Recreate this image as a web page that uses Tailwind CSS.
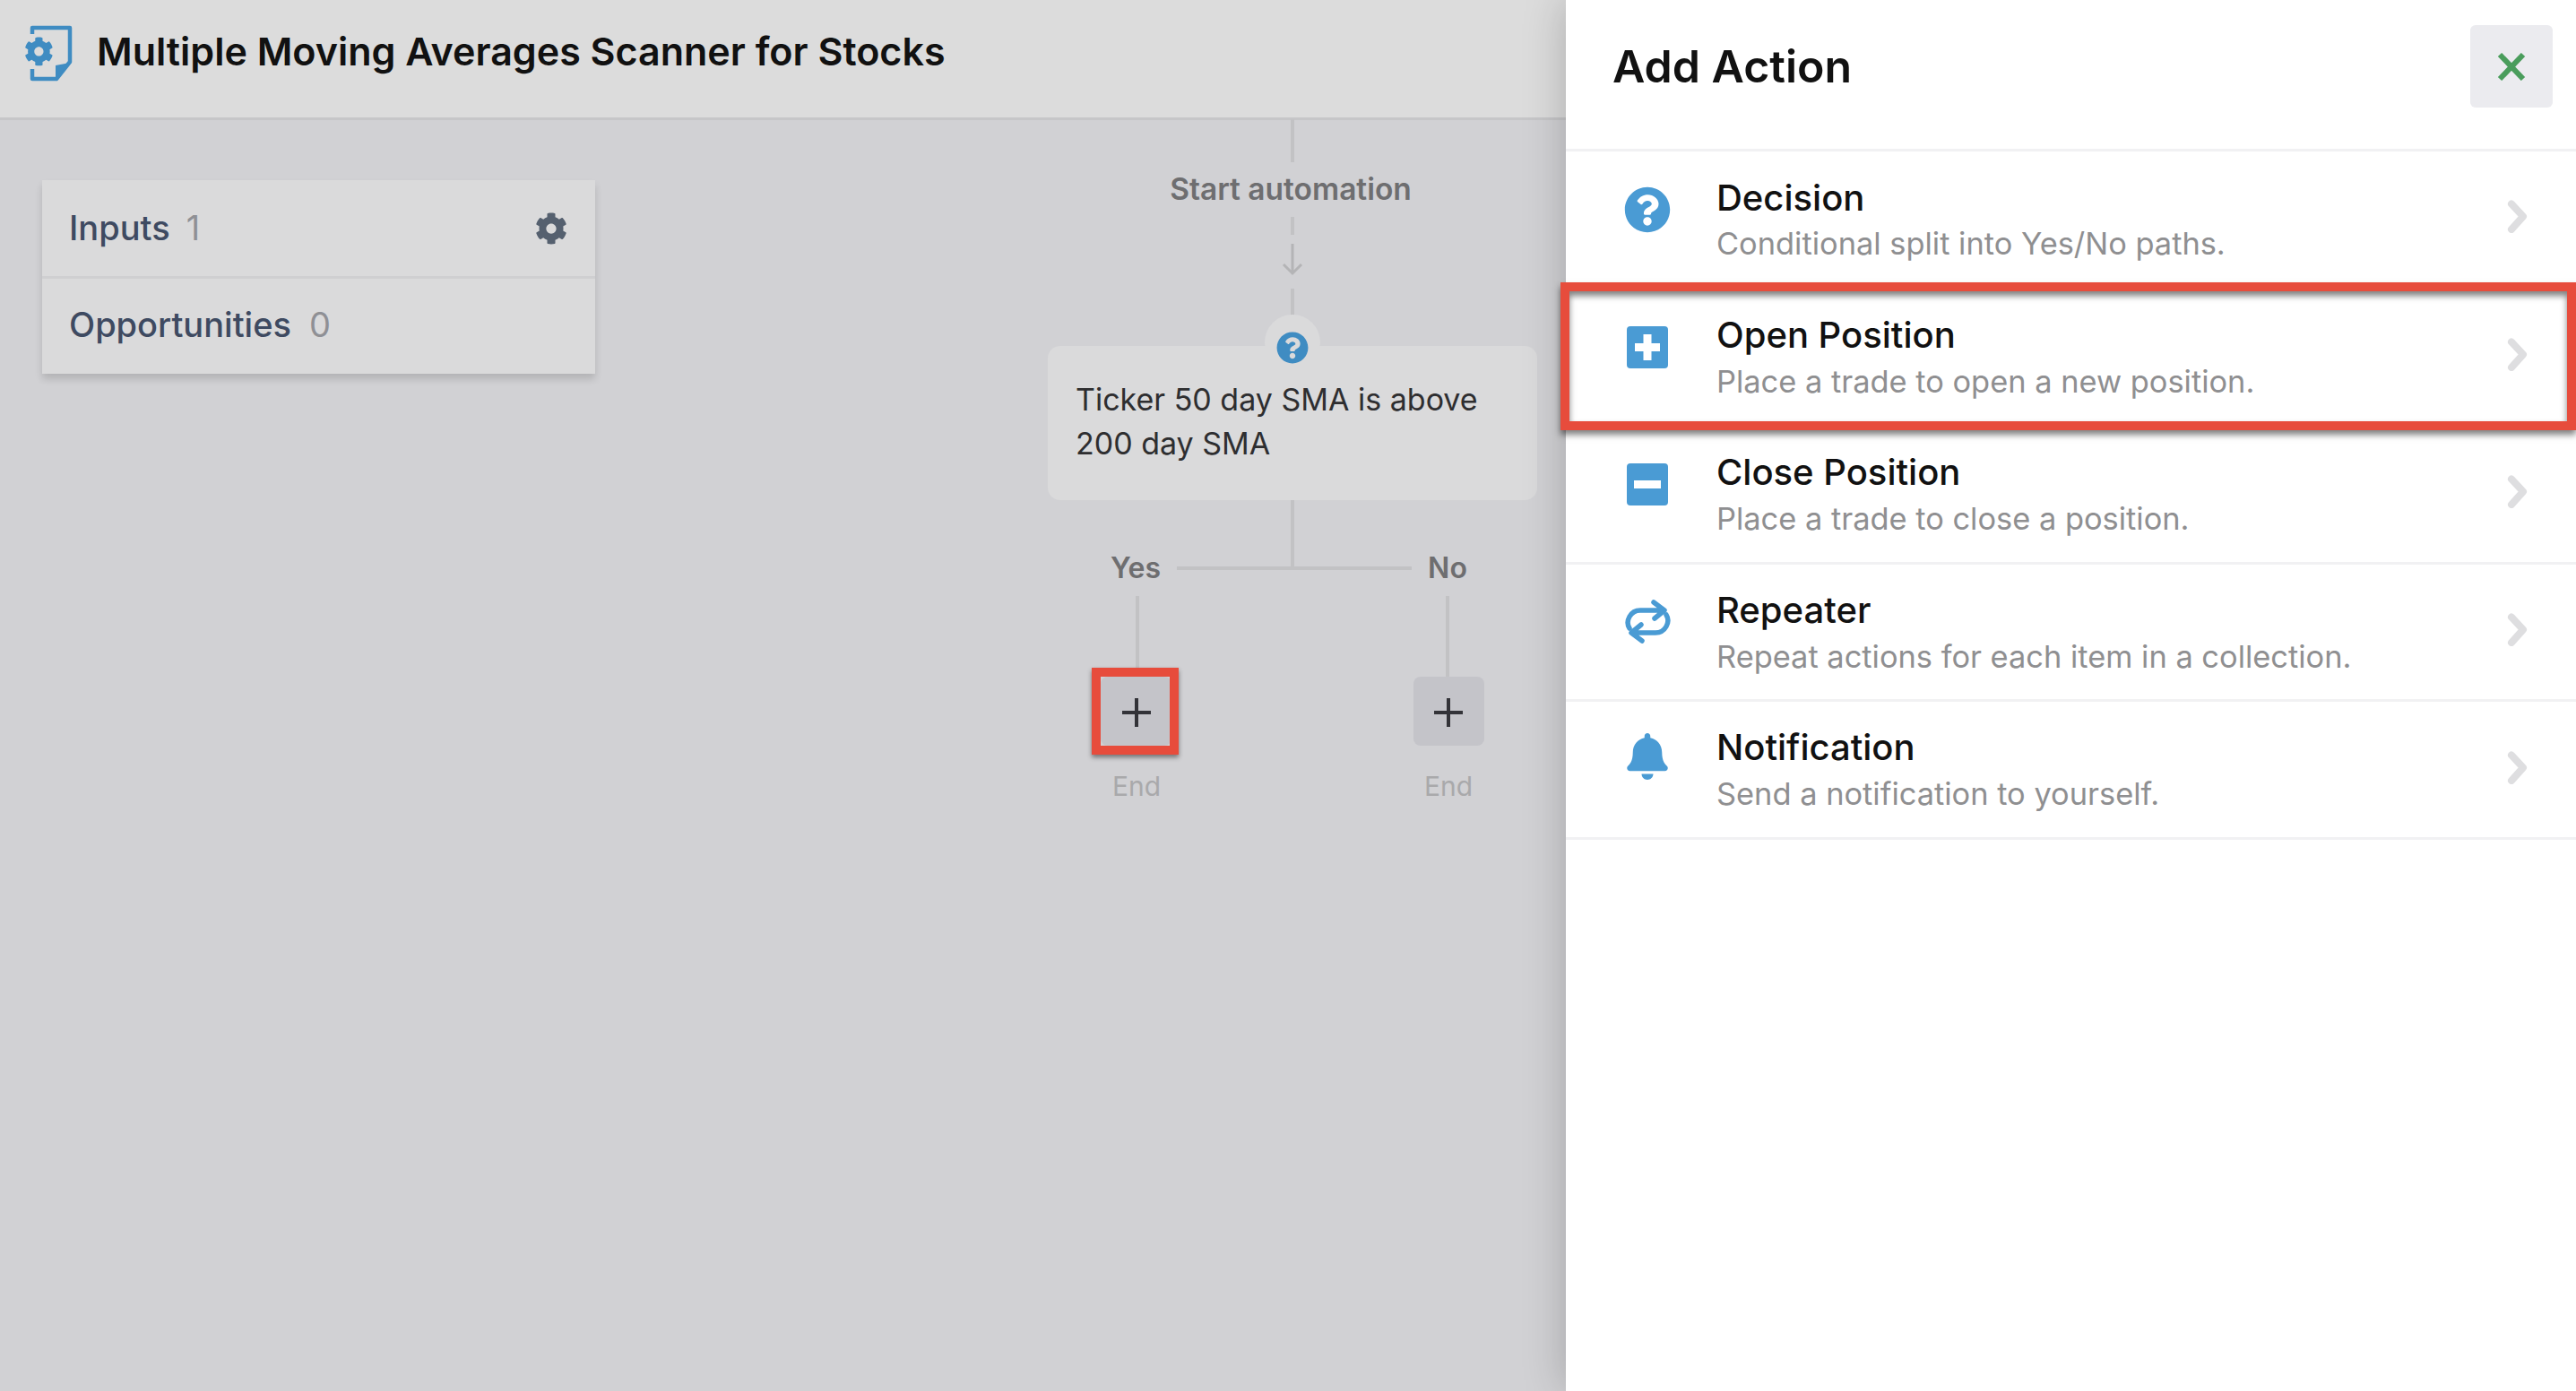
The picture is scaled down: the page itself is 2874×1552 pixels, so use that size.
<!DOCTYPE html>
<html lang="en">
<head>
    <meta charset="UTF-8">
    <title>Multiple Moving Averages Scanner for Stocks</title>
    <script src="https://cdn.jsdelivr.net/npm/@tailwindcss/browser@4"></script>
</head>
<body class="bg-[#d1d1d4] font-['Inter',sans-serif] overflow-hidden">
    <div class="flex w-[2874px] h-[1552px]">
        <!-- Dimmed automation editor -->
        <div class="w-[1747px] flex flex-col">
            <header class="h-[134px] bg-[#dcdcdc] border-b-[3px] border-[#c6c6c8] flex items-start">
                <svg class="ml-[27px] mt-[28px] w-[54px] h-[64px]" viewBox="0 0 54 64" fill="none">
                    <path d="M9 10V3H51V41L36 60H9V49" stroke="#3f8cc2" stroke-width="4.5" stroke-linejoin="round"/>
                    <path d="M35 60V45L51 42Z" fill="#3f8cc2"/>
                    <g transform="translate(0 13) scale(0.064)"><path fill="#3f8cc2" d="M487.4 315.7l-42.6-24.6c4.3-23.2 4.3-47 0-70.2l42.6-24.6c4.9-2.8 7.1-8.6 5.5-14-11.1-35.6-30-67.8-54.7-94.6-3.8-4.1-10-5.1-14.8-2.3L380.8 110c-17.9-15.4-38.5-27.3-60.8-35.1V25.8c0-5.6-3.9-10.5-9.4-11.7-36.7-8.2-74.3-7.8-109.2 0-5.5 1.2-9.4 6.1-9.4 11.7V75c-22.2 7.9-42.8 19.8-60.8 35.1L88.7 85.5c-4.9-2.8-11-1.9-14.8 2.3-24.7 26.7-43.6 58.9-54.7 94.6-1.7 5.4.6 11.2 5.5 14L67.3 221c-4.3 23.2-4.3 47 0 70.2l-42.6 24.6c-4.9 2.8-7.1 8.6-5.5 14 11.1 35.6 30 67.8 54.7 94.6 3.8 4.1 10 5.1 14.8 2.3l42.6-24.6c17.9 15.4 38.5 27.3 60.8 35.1v49.2c0 5.6 3.9 10.5 9.4 11.7 36.7 8.2 74.3 7.8 109.2 0 5.5-1.2 9.4-6.1 9.4-11.7v-49.2c22.2-7.9 42.8-19.8 60.8-35.1l42.6 24.6c4.9 2.8 11 1.9 14.8-2.3 24.7-26.7 43.6-58.9 54.7-94.6 1.5-5.5-.7-11.3-5.6-14.1zM256 336c-44.1 0-80-35.9-80-80s35.9-80 80-80 80 35.9 80 80-35.9 80-80 80z"/></g>
                </svg>
                <h1 class="ml-[27px] mt-[32px] text-[43px] leading-[50px] font-semibold text-[#111]">Multiple Moving Averages Scanner for Stocks</h1>
            </header>

            <main class="relative flex-1 -mt-px">
                <!-- Inputs / Opportunities card -->
                <div class="absolute left-[47px] top-[68px] w-[617px] bg-[#dadadb] shadow-[0_6px_8px_rgba(0,0,0,0.14)]">
                    <div class="h-[110px] border-b-[3px] border-[#cfcfd1] flex items-center pl-[30px] pr-[31px] text-[38px] font-medium text-[#3e4a61]">
                        <span>Inputs</span>
                        <span class="ml-[18px] font-normal text-[#8f9095]">1</span>
                        <svg class="ml-auto w-[36px] h-[36px]" viewBox="0 0 512 512"><path fill="#55606f" d="M487.4 315.7l-42.6-24.6c4.3-23.2 4.3-47 0-70.2l42.6-24.6c4.9-2.8 7.1-8.6 5.5-14-11.1-35.6-30-67.8-54.7-94.6-3.8-4.1-10-5.1-14.8-2.3L380.8 110c-17.9-15.4-38.5-27.3-60.8-35.1V25.8c0-5.6-3.9-10.5-9.4-11.7-36.7-8.2-74.3-7.8-109.2 0-5.5 1.2-9.4 6.1-9.4 11.7V75c-22.2 7.9-42.8 19.8-60.8 35.1L88.7 85.5c-4.9-2.8-11-1.9-14.8 2.3-24.7 26.7-43.6 58.9-54.7 94.6-1.7 5.4.6 11.2 5.5 14L67.3 221c-4.3 23.2-4.3 47 0 70.2l-42.6 24.6c-4.9 2.8-7.1 8.6-5.5 14 11.1 35.6 30 67.8 54.7 94.6 3.8 4.1 10 5.1 14.8 2.3l42.6-24.6c17.9 15.4 38.5 27.3 60.8 35.1v49.2c0 5.6 3.9 10.5 9.4 11.7 36.7 8.2 74.3 7.8 109.2 0 5.5-1.2 9.4-6.1 9.4-11.7v-49.2c22.2-7.9 42.8-19.8 60.8-35.1l42.6 24.6c4.9 2.8 11 1.9 14.8-2.3 24.7-26.7 43.6-58.9 54.7-94.6 1.5-5.5-.7-11.3-5.6-14.1zM256 336c-44.1 0-80-35.9-80-80s35.9-80 80-80 80 35.9 80 80-35.9 80-80 80z"/></svg>
                    </div>
                    <div class="h-[106px] pb-[3px] flex items-center pl-[30px] text-[38px] font-medium text-[#3e4a61]">
                        <span>Opportunities</span>
                        <span class="ml-[20px] font-normal text-[#8f9095]">0</span>
                    </div>
                </div>

                <!-- Flow diagram -->
                <div class="absolute left-[1440px] top-0 w-[4px] h-[48px] bg-[#c2c2c4]"></div>
                <div class="absolute left-[1240px] top-[56px] w-[400px] text-center text-[33.5px] leading-[44px] font-semibold text-[#6e6e70]">Start automation</div>
                <div class="absolute left-[1440px] top-[109px] w-[4px] h-[20px] bg-[#c2c2c4]"></div>
                <svg class="absolute left-[1430px] top-[139px] w-[24px] h-[36px]" viewBox="0 0 24 36" fill="none" stroke="#b4b4b6" stroke-width="3"><path d="M12 0V33M2 23L12 33L22 23"/></svg>
                <div class="absolute left-[1440px] top-[189px] w-[4px] h-[32px] bg-[#c2c2c4]"></div>

                <div class="absolute left-[1411px] top-[218px] w-[62px] h-[62px] rounded-full bg-[#dadadb]"></div>
                <div class="absolute left-[1169px] top-[253px] w-[546px] h-[172px] rounded-[14px] bg-[#dadadb] pl-[31px] pt-[35px] text-[34px] leading-[49px] text-[#2e2e30]">Ticker 50 day SMA is above<br>200 day SMA</div>
                <svg class="absolute left-[1424px] top-[237px] w-[36px] h-[36px]" viewBox="0 0 512 512"><path fill="#3f8cc2" d="M504 256c0 136.997-111.043 248-248 248S8 392.997 8 256C8 119.083 119.043 8 256 8s248 111.083 248 248zM262.655 90c-54.497 0-89.255 22.957-116.549 63.758-3.536 5.286-2.353 12.415 2.715 16.258l34.699 26.31c5.205 3.947 12.621 3.008 16.665-2.122 17.864-22.658 30.113-35.797 57.303-35.797 20.429 0 45.698 13.148 45.698 32.958 0 14.976-12.363 22.667-32.534 33.976C247.128 238.528 216 254.941 216 296v4c0 6.627 5.373 12 12 12h56c6.627 0 12-5.373 12-12v-1.333c0-28.462 83.186-29.647 83.186-106.667 0-58.002-60.165-102-116.531-102zM256 338c-25.365 0-46 20.635-46 46 0 25.364 20.635 46 46 46s46-20.636 46-46c0-25.365-20.635-46-46-46z"/></svg>

                <div class="absolute left-[1440px] top-[425px] w-[4px] h-[76px] bg-[#c2c2c4]"></div>
                <div class="absolute left-[1313px] top-[499px] w-[262px] h-[4px] bg-[#c2c2c4]"></div>
                <div class="absolute left-[1217px] top-[479px] w-[100px] text-center text-[32px] leading-[44px] font-semibold text-[#6e6e70]">Yes</div>
                <div class="absolute left-[1565px] top-[479px] w-[100px] text-center text-[32px] leading-[44px] font-semibold text-[#6e6e70]">No</div>
                <div class="absolute left-[1267px] top-[532px] w-[4px] h-[80px] bg-[#c2c2c4]"></div>
                <div class="absolute left-[1613px] top-[532px] w-[4px] h-[90px] bg-[#c2c2c4]"></div>

                <!-- Add buttons -->
                <div class="absolute left-[1228px] top-[622px] w-[79px] h-[77px] rounded-[8px] bg-[#c4c4c9] flex items-center justify-center">
                    <svg class="w-[32px] h-[32px] mt-[2px]" viewBox="0 0 32 32" fill="none" stroke="#333338" stroke-width="4"><path d="M16 0V32M0 16H32"/></svg>
                </div>
                <div class="absolute left-[1577px] top-[622px] w-[79px] h-[77px] rounded-[8px] bg-[#c4c4c9] flex items-center justify-center">
                    <svg class="w-[32px] h-[32px] mt-[2px] -ml-[1px]" viewBox="0 0 32 32" fill="none" stroke="#333338" stroke-width="4"><path d="M16 0V32M0 16H32"/></svg>
                </div>
                <div class="absolute left-[1218px] top-[721px] w-[100px] text-center text-[30px] leading-[46px] text-[#a9a9ab]">End</div>
                <div class="absolute left-[1566px] top-[721px] w-[100px] text-center text-[30px] leading-[46px] text-[#a9a9ab]">End</div>

                <!-- Red highlight on the Yes button -->
                <div class="absolute left-[1218px] top-[612px] w-[97px] h-[97px] border-[10px] border-[#e74c3c] shadow-[0_3px_5px_rgba(0,0,0,0.45)]"></div>
            </main>
        </div>

        <!-- Add Action panel -->
        <aside class="relative w-[1127px] bg-white shadow-[0_0_45px_rgba(0,0,0,0.22)]">
            <div class="h-[169px] border-b-[3px] border-[#f1f1f3] flex items-start pl-[52px] pr-[26px]">
                <h2 class="mt-[44px] text-[50px] leading-[60px] font-semibold text-[#111]">Add Action</h2>
                <button class="ml-auto mt-[28px] w-[92px] h-[92px] rounded-[6px] bg-[#ebebef] flex items-center justify-center">
                    <svg class="w-[32px] h-[31px]" viewBox="0 0 32 31" fill="none" stroke="#4a9d5c" stroke-width="6"><path d="M3 2L29 29M29 2L3 29"/></svg>
                </button>
            </div>

            <div class="h-[153.6px] border-b-[3px] border-[#f1f1f3] flex pl-[53px] pr-[53px]">
                <div class="w-[76px] flex justify-center pt-[39px]">
                    <svg class="w-[52px] h-[52px]" viewBox="0 0 512 512"><path fill="#4a9bd4" d="M504 256c0 136.997-111.043 248-248 248S8 392.997 8 256C8 119.083 119.043 8 256 8s248 111.083 248 248zM262.655 90c-54.497 0-89.255 22.957-116.549 63.758-3.536 5.286-2.353 12.415 2.715 16.258l34.699 26.31c5.205 3.947 12.621 3.008 16.665-2.122 17.864-22.658 30.113-35.797 57.303-35.797 20.429 0 45.698 13.148 45.698 32.958 0 14.976-12.363 22.667-32.534 33.976C247.128 238.528 216 254.941 216 296v4c0 6.627 5.373 12 12 12h56c6.627 0 12-5.373 12-12v-1.333c0-28.462 83.186-29.647 83.186-106.667 0-58.002-60.165-102-116.531-102zM256 338c-25.365 0-46 20.635-46 46 0 25.364 20.635 46 46 46s46-20.636 46-46c0-25.365-20.635-46-46-46z"/></svg>
                </div>
                <div class="ml-[39px] flex-1 pt-[30px]">
                    <div class="text-[40px] leading-[44px] font-medium text-[#111]">Decision</div>
                    <div class="mt-[7px] text-[34.4px] leading-[44px] text-[#8f8f91]">Conditional split into Yes/No paths.</div>
                </div>
                <svg class="self-center mb-[5px] w-[24px] h-[37px]" viewBox="0 0 24 37" fill="none" stroke="#dedee0" stroke-width="8" stroke-linecap="round" stroke-linejoin="round"><path d="M5 4.5L18 18.5L5 33"/></svg>
            </div>

            <div class="h-[153.6px] border-b-[3px] border-[#f1f1f3] flex pl-[53px] pr-[53px]">
                <div class="w-[76px] flex justify-center pt-[41px]">
                    <svg class="w-[46px] h-[47px]" viewBox="0 0 46 47"><rect width="46" height="47" rx="4" fill="#4a9bd4"/><path d="M23 9V38M9 23.5H37" stroke="#fff" stroke-width="9"/></svg>
                </div>
                <div class="ml-[39px] flex-1 pt-[29px]">
                    <div class="text-[40px] leading-[44px] font-medium text-[#111]">Open Position</div>
                    <div class="mt-[8px] text-[34.4px] leading-[44px] text-[#8f8f91]">Place a trade to open a new position.</div>
                </div>
                <svg class="self-center mb-[5px] w-[24px] h-[37px]" viewBox="0 0 24 37" fill="none" stroke="#dedee0" stroke-width="8" stroke-linecap="round" stroke-linejoin="round"><path d="M5 4.5L18 18.5L5 33"/></svg>
            </div>

            <div class="h-[153.6px] border-b-[3px] border-[#f1f1f3] flex pl-[53px] pr-[53px]">
                <div class="w-[76px] flex justify-center pt-[41px]">
                    <svg class="w-[46px] h-[47px]" viewBox="0 0 46 47"><rect width="46" height="47" rx="4" fill="#4a9bd4"/><rect x="8" y="19" width="30" height="9" fill="#fff"/></svg>
                </div>
                <div class="ml-[39px] flex-1 pt-[29px]">
                    <div class="text-[40px] leading-[44px] font-medium text-[#111]">Close Position</div>
                    <div class="mt-[8px] text-[34.4px] leading-[44px] text-[#8f8f91]">Place a trade to close a position.</div>
                </div>
                <svg class="self-center mb-[5px] w-[24px] h-[37px]" viewBox="0 0 24 37" fill="none" stroke="#dedee0" stroke-width="8" stroke-linecap="round" stroke-linejoin="round"><path d="M5 4.5L18 18.5L5 33"/></svg>
            </div>

            <div class="h-[153.6px] border-b-[3px] border-[#f1f1f3] flex pl-[53px] pr-[53px]">
                <div class="w-[76px] flex justify-center pt-[39px]">
                    <svg class="w-[53px] h-[49px]" viewBox="0 0 53 49" fill="none" stroke="#4a9bd4" stroke-width="5.5" stroke-linecap="round" stroke-linejoin="round"><path d="M6 32C1 24 7 12 18 12H44M33 3L45 12L34 21"/><path d="M47 17C52 25 46 37 35 37H9M20 46L8 37L19 28"/></svg>
                </div>
                <div class="ml-[39px] flex-1 pt-[29px]">
                    <div class="text-[40px] leading-[44px] font-medium text-[#111]">Repeater</div>
                    <div class="mt-[8px] text-[34.4px] leading-[44px] text-[#8f8f91]">Repeat actions for each item in a collection.</div>
                </div>
                <svg class="self-center mb-[5px] w-[24px] h-[37px]" viewBox="0 0 24 37" fill="none" stroke="#dedee0" stroke-width="8" stroke-linecap="round" stroke-linejoin="round"><path d="M5 4.5L18 18.5L5 33"/></svg>
            </div>

            <div class="h-[153.6px] border-b-[3px] border-[#f1f1f3] flex pl-[53px] pr-[53px]">
                <div class="w-[76px] flex justify-center pt-[35px]">
                    <svg class="w-[46px] h-[52px]" viewBox="0 0 448 512"><path fill="#4a9bd4" d="M224 512c35.32 0 63.97-28.65 63.97-64H160.03c0 35.35 28.65 64 63.97 64zm215.39-149.71c-19.32-20.76-55.47-51.99-55.47-154.29 0-77.7-54.48-139.9-127.94-155.16V32c0-17.67-14.32-32-31.98-32s-31.98 14.33-31.98 32v20.84C118.56 68.1 64.08 130.3 64.08 208c0 102.3-36.15 133.53-55.47 154.29-6 6.45-8.66 14.16-8.61 21.71.11 16.4 12.98 32 32.1 32h383.8c19.12 0 32-15.6 32.1-32 .05-7.55-2.61-15.27-8.61-21.71z"/></svg>
                </div>
                <div class="ml-[39px] flex-1 pt-[29px]">
                    <div class="text-[40px] leading-[44px] font-medium text-[#111]">Notification</div>
                    <div class="mt-[8px] text-[34.4px] leading-[44px] text-[#8f8f91]">Send a notification to yourself.</div>
                </div>
                <svg class="self-center mb-[5px] w-[24px] h-[37px]" viewBox="0 0 24 37" fill="none" stroke="#dedee0" stroke-width="8" stroke-linecap="round" stroke-linejoin="round"><path d="M5 4.5L18 18.5L5 33"/></svg>
            </div>

            <!-- Red highlight on Open Position -->
            <div class="absolute -left-[6px] top-[315px] w-[1133px] h-[165px] border-[10px] border-[#e74c3c] shadow-[0_5px_7px_rgba(0,0,0,0.5),inset_0_5px_7px_rgba(0,0,0,0.5)]"></div>
        </aside>
    </div>
</body>
</html>
